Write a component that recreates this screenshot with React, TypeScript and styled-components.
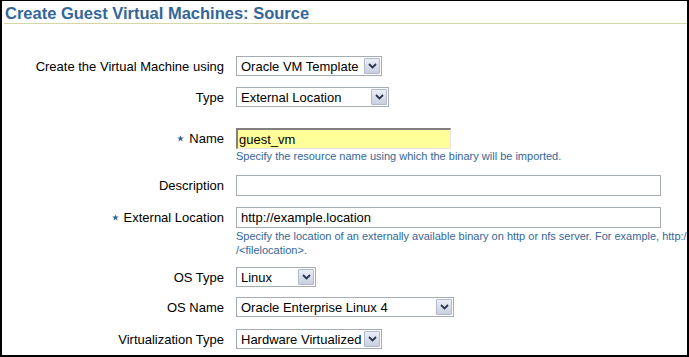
import React from 'react';
import styled, { createGlobalStyle } from 'styled-components';

const GlobalStyle = createGlobalStyle`
  html, body {
    margin: 0;
    padding: 0;
    background: #ffffff;
  }
  body {
    font-family: 'Liberation Sans', Arial, sans-serif;
  }
`;

const Frame = styled.div`
  box-sizing: border-box;
  width: 689px;
  height: 357px;
  border-style: solid;
  border-color: #000000;
  border-width: 1px 2px 2px 2px;
  overflow: hidden;
  background: #ffffff;
`;

const Header = styled.div`
  margin-left: 2px;
  height: 23px;
  border-bottom: 1px solid #d3d7a3;
  padding-left: 1px;
  box-sizing: border-box;
`;

const Title = styled.h1`
  margin: 0;
  padding-top: 3px;
  font-size: 16.5px;
  line-height: 19px;
  font-weight: bold;
  color: #336699;
`;

const Row = styled.div<{ $mt: number }>`
  display: grid;
  grid-template-columns: 222px 1fr;
  column-gap: 12px;
  margin-top: ${(p) => p.$mt}px;
  align-items: start;
`;

const Label = styled.div<{ $h: number }>`
  display: flex;
  justify-content: flex-end;
  align-items: center;
  gap: 5px;
  height: ${(p) => p.$h}px;
  font-size: 13px;
  color: #000000;
  white-space: nowrap;
`;

const Field = styled.div`
  display: flex;
  flex-direction: column;
  align-items: flex-start;
  min-width: 0;
`;

const SelectBox = styled.div<{ $w: number }>`
  box-sizing: border-box;
  width: ${(p) => p.$w}px;
  height: 20px;
  border: 1px solid #a5acb2;
  background: #ffffff;
  display: flex;
  align-items: center;
  justify-content: space-between;
  padding: 0 1px 0 4px;
  font-size: 13px;
  color: #000000;
  white-space: nowrap;
`;

const ArrowButton = styled.span`
  box-sizing: border-box;
  flex: none;
  width: 16px;
  height: 16px;
  border: 1px solid #b3b9cc;
  border-radius: 1px;
  background: linear-gradient(#eceef6, #c9cfe0);
  display: flex;
  align-items: center;
  justify-content: center;
`;

const TextInput = styled.div<{ $w: number; $hl?: boolean }>`
  box-sizing: border-box;
  width: ${(p) => p.$w}px;
  height: 21px;
  display: flex;
  align-items: center;
  padding-left: 4px;
  font-size: 13px;
  color: #000000;
  background: ${(p) => (p.$hl ? '#ffff99' : '#ffffff')};
  border: 1px solid #a5acb2;
  ${(p) =>
    p.$hl &&
    `
    border-top: 2px solid #7f7f7f;
    border-left: 2px solid #7f7f7f;
    border-right: 1px solid #e4e4e4;
    border-bottom: 1px solid #e4e4e4;
    padding-left: 1px;
  `}
`;

const Hint = styled.div<{ $lh: number }>`
  margin-top: 1px;
  font-size: 11px;
  line-height: ${(p) => p.$lh}px;
  color: #336699;
  white-space: nowrap;
`;

const Star = () => (
  <svg width="7" height="7" viewBox="0 0 10 10">
    <path
      d="M5 0.5 L6.2 3.6 L9.6 3.7 L6.9 5.8 L7.9 9.2 L5 7.2 L2.1 9.2 L3.1 5.8 L0.4 3.7 L3.8 3.6 Z"
      fill="#336699"
    />
  </svg>
);

const Select = ({ value, width }: { value: string; width: number }) => (
  <SelectBox $w={width}>
    <span>{value}</span>
    <ArrowButton>
      <svg width="9" height="6" viewBox="0 0 9 6">
        <path d="M1 1 L4.5 4.5 L8 1" fill="none" stroke="#2b3550" strokeWidth="1.8" />
      </svg>
    </ArrowButton>
  </SelectBox>
);

export default function App() {
  return (
    <>
      <GlobalStyle />
      <Frame>
        <Header>
          <Title>Create Guest Virtual Machines: Source</Title>
        </Header>

        <Row $mt={32}>
          <Label $h={20}>Create the Virtual Machine using</Label>
          <Field>
            <Select value="Oracle VM Template" width={146} />
          </Field>
        </Row>

        <Row $mt={11}>
          <Label $h={20}>Type</Label>
          <Field>
            <Select value="External Location" width={153} />
          </Field>
        </Row>

        <Row $mt={21}>
          <Label $h={21}>
            <Star />
            Name
          </Label>
          <Field>
            <TextInput $w={215} $hl>
              guest_vm
            </TextInput>
            <Hint $lh={13}>Specify the resource name using which the binary will be imported.</Hint>
          </Field>
        </Row>

        <Row $mt={12}>
          <Label $h={21}>Description</Label>
          <Field>
            <TextInput $w={425} />
          </Field>
        </Row>

        <Row $mt={11}>
          <Label $h={21}>
            <Star />
            External Location
          </Label>
          <Field>
            <TextInput $w={425}>http://example.location</TextInput>
            <Hint $lh={14}>
              Specify the location of an externally available binary on http or nfs server. For example, http://
              <br />
              /&lt;filelocation&gt;.
            </Hint>
          </Field>
        </Row>

        <Row $mt={10}>
          <Label $h={20}>OS Type</Label>
          <Field>
            <Select value="Linux" width={80} />
          </Field>
        </Row>

        <Row $mt={10}>
          <Label $h={20}>OS Name</Label>
          <Field>
            <Select value="Oracle Enterprise Linux 4" width={218} />
          </Field>
        </Row>

        <Row $mt={12}>
          <Label $h={20}>Virtualization Type</Label>
          <Field>
            <Select value="Hardware Virtualized" width={146} />
          </Field>
        </Row>
      </Frame>
    </>
  );
}
